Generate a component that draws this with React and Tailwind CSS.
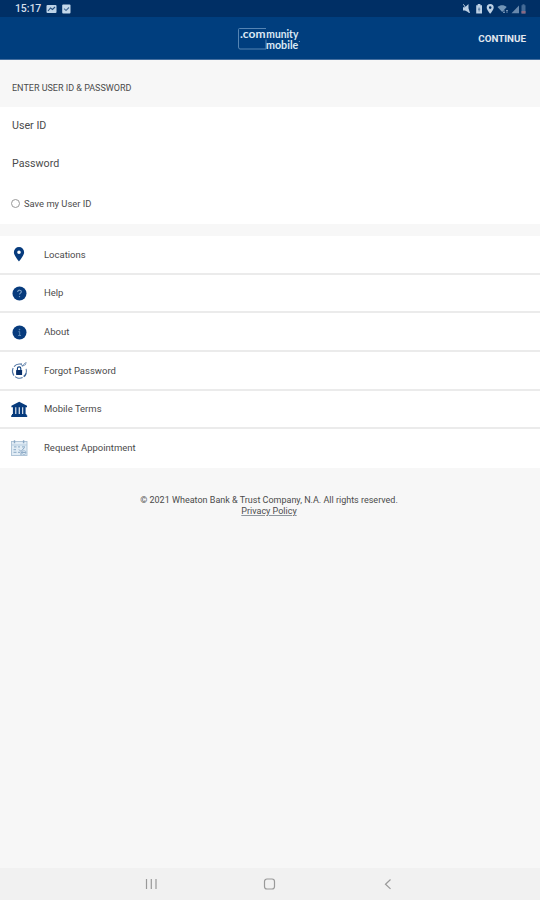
const navy = '#073b7d';

function PinIcon() {
  return (
    <svg width="20" height="20" viewBox="0 0 20 20" fill={navy}>
      <path fillRule="evenodd" d="M10 3.1a5.1 5.1 0 0 0-5.1 5.1c0 3.5 5.1 9.2 5.1 9.2s5.1-5.7 5.1-9.2A5.1 5.1 0 0 0 10 3.1Zm0 3.3a1.8 1.8 0 1 1 0 3.6 1.8 1.8 0 0 1 0-3.6Z" />
    </svg>
  );
}

function HelpIcon() {
  return (
    <svg width="20" height="20" viewBox="0 0 20 20" fill="none">
      <circle cx="10.5" cy="10.5" r="7" fill={navy} />
      <path d="M8.7 8.9c0-2.4 3.8-2.2 3.6 0-.1 1.2-1.8 1.3-1.8 2.7" stroke="#7fa3c9" strokeWidth="1.1" />
      <circle cx="10.5" cy="13.6" r=".7" fill="#7fa3c9" />
    </svg>
  );
}

function InfoIcon() {
  return (
    <svg width="20" height="20" viewBox="0 0 20 20" fill="none">
      <circle cx="10.5" cy="10.5" r="7" fill={navy} />
      <path d="M9.4 9.7h1.3v3.7M9.2 13.5h2.8" stroke="#5e89b6" strokeWidth="1" />
      <circle cx="10.5" cy="7.6" r=".8" fill="#5e89b6" />
    </svg>
  );
}

function ResetLockIcon() {
  return (
    <svg width="20" height="20" viewBox="0 0 20 20" fill="none" stroke={navy}>
      <path d="M12.4 4.3a7.1 7.1 0 1 0 4.9 9" strokeWidth="1.1" strokeDasharray="8 1.5" opacity=".7" />
      <path d="M14.5 16.4a7 7 0 0 0 2.6-7.6" strokeWidth="1.1" opacity=".65" />
      <path d="M12 3l1.2 3.2 3.2-1.4.8-2.6M13.2 6.2l3.2-3.6" strokeWidth=".9" opacity=".55" />
      <path d="M8.4 10V8.6a1.7 1.7 0 0 1 3.4 0V10" strokeWidth="1.1" />
      <rect x="7.1" y="9.9" width="6" height="5" rx=".5" fill="#062d68" stroke="none" />
    </svg>
  );
}

function BankIcon() {
  return (
    <svg width="20" height="20" viewBox="0 0 20 20" fill={navy}>
      <path d="M10.2 2.8 18 6.8v1.5H2.4V6.8ZM3.9 8h2.4v7H3.9ZM7.3 8h2.4v7H7.3ZM10.8 8h2.4v7h-2.4ZM14.2 8h2.4v7h-2.4ZM3 15h14.4v1.2H3ZM2.2 16.2h16V18h-16Z" />
    </svg>
  );
}

function CalendarIcon() {
  return (
    <svg width="20" height="20" viewBox="0 0 20 20" fill="none">
      <rect x="2.5" y="3.5" width="15.5" height="14" fill="#e1ecf5" stroke="#a9c0d4" strokeWidth=".9" />
      <path d="M3 7h15" stroke="#b4cbde" strokeWidth="1" />
      <path d="M5.5 2.2v3M14.6 2.2v3" stroke="#8aa8c4" strokeWidth="1.4" />
      <path d="M5 8.9h2.5M9 8.9h2M13 8.9h3M4.5 11.7H7M4.5 14.4h3M9 14.4h2" stroke="#9ab5ce" strokeWidth="1.3" />
      <path d="M10 11.5l2 2 3.5-4M12 17v-2.6h5" stroke="#86a4c1" strokeWidth="1" />
      <circle cx="15" cy="14.6" r="2" stroke="#9bb6cf" strokeWidth=".8" />
    </svg>
  );
}

const links = [
  ['Locations', PinIcon],
  ['Help', HelpIcon],
  ['About', InfoIcon],
  ['Forgot Password', ResetLockIcon],
  ['Mobile Terms', BankIcon],
  ['Request Appointment', CalendarIcon],
];

function StatusBar() {
  return (
    <div className="flex h-[17px] items-center justify-between bg-[#002f65] pr-[13px] pl-[15px]">
      <div className="flex items-center">
        <span className="w-[31px] pt-px text-[10.5px] leading-none font-medium tracking-[-0.1px] text-[#d5dfeb]">15:17</span>
        <svg width="26" height="12" viewBox="0 0 26 12">
          <rect x=".5" y="2" width="10" height="8" rx="1" fill="#bdd3e8" />
          <path d="m2 8 2.5-3 2 1.5L9 4" fill="none" stroke="#244f7e" strokeWidth="1.1" />
          <rect x="16.2" y="1.5" width="8.3" height="9" rx="1" fill="#c4d8ea" />
          <path d="m18 5.7 2 1.8 3-3" fill="none" stroke="#486d96" strokeWidth="1.1" />
        </svg>
      </div>
      <svg width="65" height="12" viewBox="0 0 65 12" fill="#bcd0e4">
        <path d="M1 4.2h2L6.5 1v4.2L8 10 3 7.4H1Z" />
        <path d="m1.4 1.3 6 8.7" stroke="#bcd0e4" />
        <path d="M14.2 2.3h1.5V1h2.7v1.3H20v8.2h-5.8Z" />
        <path d="M16 6.2h2.3M17.1 4.5v4" stroke="#54789f" strokeWidth=".9" />
        <path fillRule="evenodd" d="M28.2 1a3.5 3.5 0 0 0-3.5 3.5c0 2.4 3.5 6.3 3.5 6.3s3.5-3.9 3.5-6.3A3.5 3.5 0 0 0 28.2 1Zm0 2.3a1.3 1.3 0 1 1 0 2.6 1.3 1.3 0 0 1 0-2.6Z" />
        <path d="M35.5 4c2.8-2.5 6.5-2.5 9.2 0L40.2 9Z" fill="#7295b7" />
        <path d="M42 7v3m-1-1 1 1 1-1m2 1V7m-1 1 1-1 1 1" fill="none" stroke="#7d9cbd" strokeWidth=".8" />
        <path d="M49.5 10.3 57 2.5v7.8Z" fill="#6888ac" />
        <path d="M59.5 2.3h1V1.2h2v1.1h1v8.2h-4Z" fill="#456b96" />
        <path d="M59.5 8h4v2.5h-4Z" fill="#8b6982" />
      </svg>
    </div>
  );
}

function Header() {
  return (
    <header className="grid h-[43px] grid-cols-[1fr_64px_1fr] items-center border-b border-[#466f9f] bg-[#003e7e]">
      <span />
      <svg width="64" height="32" viewBox="0 -3 64 32">
        <path d="M28 3.5H1.5Q.5 3.5.5 4.5V22q0 2 1.5 2H28V14.5" fill="none" stroke="#5f8cb9" strokeWidth=".9" />
        <g fill="#dce9f5" fontFamily="Lato, sans-serif" fontSize="10.6" fontWeight="700">
          <text x="2" y="12.7" textLength="25.5" lengthAdjust="spacingAndGlyphs">.com</text>
          <text x="28.3" y="12.7" textLength="32" lengthAdjust="spacingAndGlyphs">munity</text>
          <text x="28" y="23.7" textLength="32.3" lengthAdjust="spacingAndGlyphs">mobile</text>
        </g>
        <circle cx="61.3" cy="16.5" r=".6" fill="#8caed0" />
      </svg>
      <button className="mt-px mr-[14px] justify-self-end text-[9.8px] leading-none font-bold text-[#e3e8ef]">CONTINUE</button>
    </header>
  );
}

export default function App() {
  return (
    <div className="flex h-[900px] w-[540px] flex-col overflow-hidden bg-[#f7f7f7] font-['Roboto',sans-serif] text-[#4b4b4b]">
      <StatusBar />
      <Header />
      <h1 className="flex h-[47px] items-center pt-[10px] pl-3 text-[9px] leading-none font-normal">
        <span>ENTER USER ID &amp; PASSWORD</span>
      </h1>
      <form className="h-[117px] bg-white pl-3">
        <div className="flex h-9 items-center pt-[2px] text-[10.7px] leading-none"><span>User ID</span></div>
        <div className="flex h-10 items-center pt-[3px] text-[10.7px] leading-none"><span>Password</span></div>
        <label className="flex h-[41px] items-center text-[9.4px] leading-none">
          <span className="mr-1 -ml-[1px] size-[9px] rounded-full border border-[#999] bg-white" />
          <span>Save my User ID</span>
        </label>
      </form>
      <nav className="mt-3 grid h-[232px] grid-rows-6 bg-white">
        {links.map(([label, Icon], i) => (
          <a key={label} className={`flex items-center pl-[9px] ${i < 5 ? 'border-b-2 border-[#ebebeb]' : 'pb-[2px]'}`}>
            <Icon />
            <span className="ml-[15px] text-[9.5px] leading-none">{label}</span>
          </a>
        ))}
      </nav>
      <footer className="mt-[27px] text-center text-[9px] leading-[11px]">
        <p className="pr-[2px]">© 2021 Wheaton Bank &amp; Trust Company, N.A. All rights reserved.</p>
        <p className="pr-[2px]"><a className="underline decoration-[#8e969d]">Privacy Policy</a></p>
      </footer>
      <div className="mt-auto flex h-8 items-center bg-[#f1f1f1] pl-[145px]">
        <svg width="250" height="14" viewBox="0 0 250 14" fill="none" stroke="#999" strokeWidth="1.2">
          <path d="M1.5 2v10M6.3 2v10M11 2v10" />
          <rect x="119.5" y="2" width="10" height="10" rx="2.5" />
          <path d="m245.5 2.5-5 4.7 5 4.7" />
        </svg>
      </div>
    </div>
  );
}
